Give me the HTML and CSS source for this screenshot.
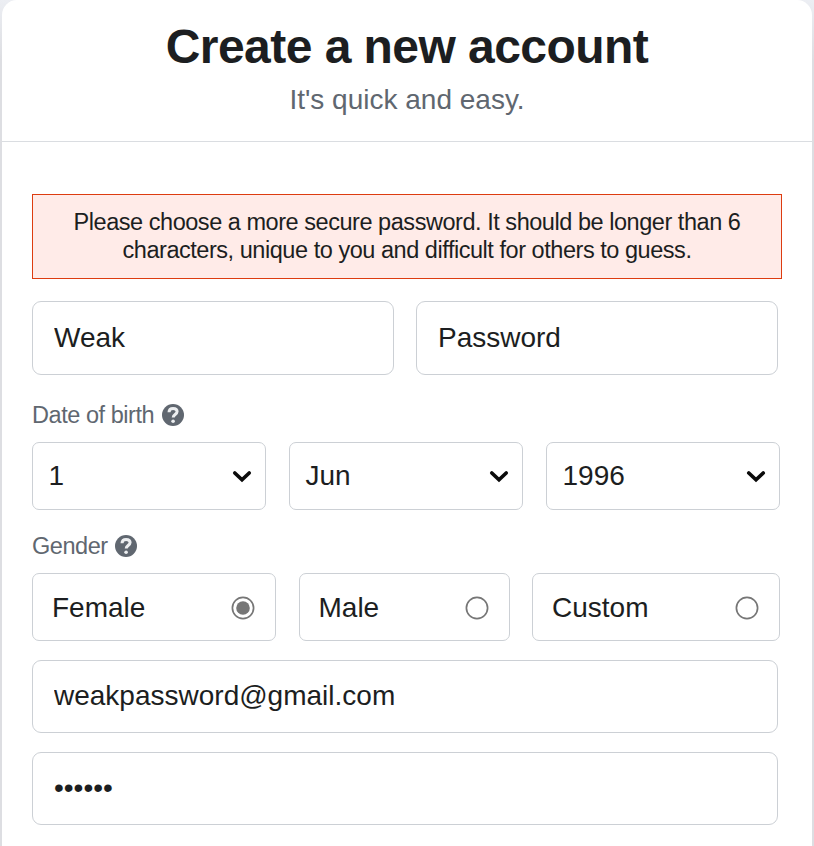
FILE: index.html
```html
<!DOCTYPE html>
<html lang="en">
<head>
<meta charset="utf-8">
<title>Create a new account</title>
<link rel="stylesheet" href="styles.css">
</head>
<body>
<main class="card">
  <header class="head">
    <h1>Create a new account</h1>
    <p>It's quick and easy.</p>
  </header>
  <form class="form">
    <div class="error">Please choose a more secure password. It should be longer than 6<br>characters, unique to you and difficult for others to guess.</div>
    <div class="names">
      <input class="field" type="text" value="Weak">
      <input class="field" type="text" value="Password">
    </div>
    <div class="label birth">
      <span>Date of birth</span>
      <svg class="help" viewBox="0 0 22 22"><circle cx="11" cy="11" r="11" fill="#606770"/><path d="M7 8.2C7.1 5.6 8.9 4.4 11.1 4.4c2.5 0 4 1.3 4 3.2 0 2.9-3.9 3-3.9 5.8" fill="none" stroke="#eceef0" stroke-width="3"/><circle cx="11.1" cy="17.3" r="1.8" fill="#eceef0"/></svg>
    </div>
    <div class="dates">
      <div class="select"><span>1</span><svg class="chevron" viewBox="0 0 20 13"><path d="M2.8 3l7.2 6.800L17.200 3" /></svg></div>
      <div class="select"><span>Jun</span><svg class="chevron" viewBox="0 0 20 13"><path d="M2.8 3l7.2 6.800L17.200 3" /></svg></div>
      <div class="select"><span>1996</span><svg class="chevron" viewBox="0 0 20 13"><path d="M2.8 3l7.2 6.800L17.200 3" /></svg></div>
    </div>
    <div class="label gender">
      <span>Gender</span>
      <svg class="help" viewBox="0 0 22 22"><circle cx="11" cy="11" r="11" fill="#606770"/><path d="M7 8.2C7.1 5.6 8.9 4.4 11.1 4.4c2.5 0 4 1.3 4 3.2 0 2.9-3.9 3-3.9 5.8" fill="none" stroke="#eceef0" stroke-width="3"/><circle cx="11.1" cy="17.3" r="1.8" fill="#eceef0"/></svg>
    </div>
    <div class="genders">
      <label class="option"><span>Female</span><svg class="radio" viewBox="0 0 24 24"><circle cx="12" cy="12" r="10.6"/><circle class="dot" cx="12" cy="12" r="6.8"/></svg></label>
      <label class="option"><span>Male</span><svg class="radio" viewBox="0 0 24 24"><circle cx="12" cy="12" r="10.6"/></svg></label>
      <label class="option"><span>Custom</span><svg class="radio" viewBox="0 0 24 24"><circle cx="12" cy="12" r="10.6"/></svg></label>
    </div>
    <input class="field wide" type="text" value="weakpassword@gmail.com">
    <input class="field wide" type="password" value="secret">
  </form>
</main>
</body>
</html>
```
FILE: styles.css
```css
* { box-sizing: border-box; }

html { height: 100%; overflow: hidden; }

body {
  height: 100%;
  margin: 0;
  padding: 0 2px;
  background: linear-gradient(#eceef3, #dddee2 60px, #dddee2);
  font-family: "Liberation Sans", Arial, sans-serif;
  color: #1c1e21;
}

.card {
  height: 100%;
  background: #fff;
  border-radius: 15px 15px 0 0;
}

.head {
  height: 142px;
  padding-top: 20px;
  border-bottom: 1px solid #dadde1;
  text-align: center;
}

.head h1 { margin: 0; font-size: 48px; line-height: 54px; letter-spacing: -0.55px; }
.head p { margin: 9px 0 0; font-size: 28px; line-height: 34px; color: #606770; }

.form { padding: 52px 30px 0; }

.error {
  height: 85px;
  padding-top: 13px;
  background: #ffebe8;
  border: 1px solid #dd3c10;
  text-align: center;
  font-size: 23.5px;
  letter-spacing: -0.46px;
  line-height: 28px;
}

.names { display: grid; grid-template-columns: 362px 362px; gap: 22px; margin-top: 22px; }

.field {
  display: block;
  width: 100%;
  height: 74px;
  padding: 0 21px;
  border: 1px solid #ccd0d5;
  border-radius: 9px;
  background: #fff;
  color: #1c1e21;
  font: 28px "Liberation Sans", Arial, sans-serif;
}

.field.wide { width: 746px; height: 73px; margin-top: 19px; padding: 0 21px 2px; }

.label { display: flex; align-items: center; gap: 7.5px; height: 24px; font-size: 23.5px; letter-spacing: -0.45px; line-height: 24px; color: #606770; }
.birth { margin-top: 28px; }
.gender { margin-top: 24px; }
.help { width: 22px; height: 22px; }

.dates { display: grid; grid-template-columns: repeat(3, 234px); gap: 23px; margin-top: 15px; }
.genders { display: grid; grid-template-columns: 244px 211px 248px; column-gap: 22.5px; margin-top: 15px; }

.select, .option {
  display: flex;
  align-items: center;
  justify-content: space-between;
  height: 68px;
  border: 1px solid #ccd0d5;
  border-radius: 7px;
  font-size: 28px;
}

.select { padding: 0 13px 0 15.5px; }
.option { padding: 1px 20px 0 19px; }

.chevron { width: 20px; height: 13px; fill: none; stroke: #0b0b0b; stroke-width: 3.7; stroke-linecap: round; }
.radio { width: 24px; height: 24px; fill: none; stroke: #767676; stroke-width: 1.7; }
.dot { fill: #767676; stroke: none; }
```
